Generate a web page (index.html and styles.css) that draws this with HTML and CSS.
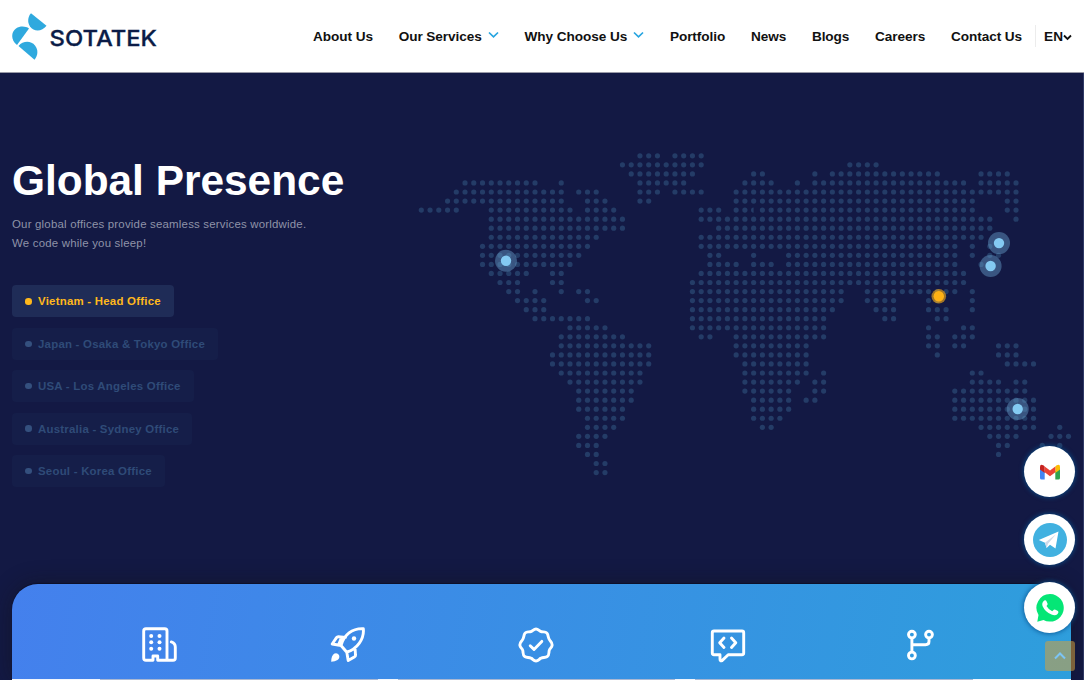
FILE: index.html
```html
<!DOCTYPE html>
<html lang="en">
<head>
<meta charset="utf-8">
<title>SotaTek - Global Presence</title>
<link rel="stylesheet" href="styles.css">
</head>
<body>
<header class="header">
  <a class="logo">
    <svg class="logo-svg" width="146" height="48" viewBox="0 0 146 48">
      <g fill="#2fa9de">
        <path d="M19 1.300L34.500 13.700C30 19.700 22 20 18 14.500C15 10 16 4.500 19 1.300Z"/>
        <path d="M17 16.500L5 33C-1.500 28 -1 20 4 16.500C8 13.800 13.500 14 17 16.500Z"/>
        <path d="M6.500 34C11 28.500 19 28.500 23 33.500C26.500 38 26 43.500 22.500 47.700Z"/>
      </g>
      <text class="logo-text" x="37.500" y="34.300" textLength="107.500" lengthAdjust="spacingAndGlyphs">SOTATEK</text>
    </svg>
  </a>
  <nav class="nav">
    <a>About Us</a>
    <a>Our Services<svg class="caret" width="11" height="8" viewBox="0 0 11 8"><path d="M1 1.500 L5.500 5.800 L10 1.500"/></svg></a>
    <a>Why Choose Us<svg class="caret" width="11" height="8" viewBox="0 0 11 8"><path d="M1 1.500 L5.500 5.800 L10 1.500"/></svg></a>
    <a>Portfolio</a>
    <a>News</a>
    <a>Blogs</a>
    <a>Careers</a>
    <a>Contact Us</a>
  </nav>
  <div class="lang">EN<svg width="9" height="7" viewBox="0 0 9 7"><path d="M1 1.500 L4.500 5 L8 1.500"/></svg></div>
</header>

<main class="hero">
  <section class="presence">
    <div class="intro">
      <h1>Global Presence</h1>
      <p>Our global offices provide seamless services worldwide.<br>We code while you sleep!</p>
      <ul class="offices">
        <li class="active">Vietnam - Head Office</li>
        <li>Japan - Osaka &amp; Tokyo Office</li>
        <li>USA - Los Angeles Office</li>
        <li>Australia - Sydney Office</li>
        <li>Seoul - Korea Office</li>
      </ul>
    </div>
    <svg class="map" width="664" height="340" viewBox="410 145 664 340">
      <g id="dots"><path d="M753.600 207.500a2.600 2.600 0 0 0 0 5.200z"/></g>
      <g class="pin">
        <circle class="halo" cx="506" cy="260.800" r="11"/><circle cx="506" cy="260.800" r="5.200"/>
        <circle class="halo" cx="999" cy="243.100" r="11"/><circle cx="999" cy="243.100" r="5.200"/>
        <circle class="halo" cx="990.600" cy="266" r="11"/><circle cx="990.600" cy="266" r="5.200"/>
        <circle class="halo" cx="1017.700" cy="409" r="11"/><circle cx="1017.700" cy="409" r="5.200"/>
      </g>
      <g class="pin hq"><circle class="halo" cx="938.800" cy="296.300" r="7.300"/><circle cx="938.800" cy="296.300" r="5.200"/></g>
    </svg>
  </section>

  <section class="stats">
    <svg class="icon" width="36" height="36" viewBox="0 0 36 36">
      <path d="M4 1.700H22.700Q25 1.700 25 4V33.300H15.700V29H11V33.300H4Q1.700 33.300 1.700 31V4Q1.700 1.700 4 1.700Z M25 33.300H31Q33.300 33.300 33.300 31V20Q33.300 16.200 29.300 14.900"/>
      <g class="solid"><circle cx="9.200" cy="9" r="2"/><circle cx="17.500" cy="9" r="2"/><circle cx="9.200" cy="15.300" r="2"/><circle cx="17.500" cy="15.300" r="2"/><circle cx="9.200" cy="21.700" r="2"/><circle cx="17.500" cy="21.700" r="2"/></g>
    </svg>
    <svg class="icon" width="36" height="36" viewBox="0 0 36 36">
      <path d="M11 18.500C14 8 22 1.200 33.300 1.700C34.500 12 27 22 16.800 25.200Z M11 18.500L2.200 17L6.500 10.600Q7.200 9.600 8.500 9.700L15.500 10.400 M16.800 25.200L18.200 33.600L24.700 29.700Q25.600 29 25.500 28L25 20.500 M11.500 10.500L8.700 17.500"/>
      <g class="solid"><circle cx="24" cy="11.500" r="2.200"/><path d="M1.200 34.800Q1.200 28.500 4.500 26.600Q7.300 25.500 9 28Q10.200 31 7.500 33Q5 34.700 1.200 34.800Z"/></g>
    </svg>
    <svg class="icon" width="36" height="36" viewBox="0 0 36 36">
      <path d="M18 2C20.500 2 21.400 4.500 23.700 4.800C26 5.100 28 4.200 29.300 6.700C30.400 8.800 30.100 11 31.600 13C32.700 14.700 34.700 15.600 34 18.700C33.600 20.600 31.700 21.500 31.200 23.500C30.700 25.700 31.400 28.200 29.300 29.500C27.300 30.800 25.200 30.200 23 31.200C21 32 20.400 34 18 34C15.600 34 15 32 13 31.200C10.800 30.200 8.700 30.800 6.700 29.500C4.600 28.200 5.300 25.700 4.800 23.500C4.300 21.500 2.400 20.600 2 18.700C1.300 15.600 3.300 14.700 4.400 13C5.900 11 5.600 8.800 6.700 6.700C8 4.200 10 5.100 12.300 4.800C14.600 4.500 15.500 2 18 2Z"/>
      <path d="M12.200 18.700L16 22.400L23.800 14.400"/>
    </svg>
    <svg class="icon" width="36" height="36" viewBox="0 0 36 36">
      <path d="M4 4H32Q33.700 4 33.700 5.700V26Q33.700 27.700 32 27.700H18.200L12 33.600Q10 34.400 10 32V27.700H4Q2.300 27.700 2.300 26V5.700Q2.300 4 4 4Z M14 11L9.700 15.700L14 20.500 M21.500 11L25.800 15.700L21.500 20.500"/>
    </svg>
    <svg class="icon" width="36" height="36" viewBox="0 0 36 36">
      <circle cx="8.900" cy="7.600" r="3.400"/><circle cx="26" cy="7.600" r="3.400"/><circle cx="8.900" cy="28.500" r="3.400"/>
      <path d="M8.900 11.300V24.800 M8.900 17.700H22.500Q26 17.700 26 14.500V11.300"/>
    </svg>
    <div class="stats-foot"><i></i><i></i><i></i></div>
  </section>
</main>

<aside class="contacts">
  <a class="round">
    <svg width="20" height="16" viewBox="0 0 20 16"><path fill="#4285f4" d="M0 4.500L4.700 7V15.500H1.500Q0 15.500 0 14Z"/><path fill="#2fa350" d="M20 4.500L15.300 7V15.500H18.500Q20 15.500 20 14Z"/><path fill="#fbbc04" d="M15.300 2.400L16.700 1.300Q20-.5 20 3V5.600L15.300 9Z"/><path fill="#c5221f" d="M4.700 2.400L3.300 1.300Q0-.5 0 3V5.600L4.700 9Z"/><path fill="#ea4335" d="M4.700 2.400L10 6.500L15.300 2.400V8.300L10 12.200L4.700 8.300Z"/></svg>
  </a>
  <a class="round">
    <svg width="34" height="34" viewBox="0 0 34 34"><circle cx="17" cy="17" r="17" fill="#41b1e0"/><path fill="#fff" d="M25.500 8.500L5.800 17L12 19.800L13.600 25L17 21.800L22.500 25.500Z"/><path fill="#cfd9e8" d="M12 19.800L23 11.300L15 20.800L13.600 25Z"/></svg>
  </a>
  <a class="round">
    <svg width="28" height="28" viewBox="0 0 28 28"><path fill="#05e676" d="M14 0A13.800 13.800 0 1 1 7.500 26L1.300 27.700L2.500 21A13.800 13.800 0 0 1 14 0Z"/><path fill="#fff" d="M8.200 6.600Q9.800 5.700 10.500 7.200L11.600 9.800Q11.900 10.700 10.500 12.100Q12.400 15.600 16.200 17.300L17.800 15.800Q18.600 15.200 19.500 15.700L22 17Q23.100 17.900 21.600 19.900Q19.500 22 15.500 20.600Q9 17.900 6.500 12Q5.500 8.700 8.200 6.600Z"/></svg>
  </a>
  <a class="to-top"><svg width="12" height="8" viewBox="0 0 12 8"><path d="M1 6.500L6 1.500L11 6.500"/></svg></a>
</aside>
<script src="map.js"></script>
</body>
</html>
```

FILE: styles.css
```css
* { box-sizing: border-box; }
body {
  margin: 0;
  width: 1084px;
  height: 680px;
  overflow: hidden;
  position: relative;
  font-family: "Liberation Sans", Arial, sans-serif;
  background: #131944;
}
.header {
  height: 73px;
  padding: 0 12px;
  display: flex;
  align-items: center;
  background: #fff;
  border-bottom: 1px solid #9a9ba8;
}
.logo { display: block; height: 48px; }
.logo-svg { display: block; }
.logo-text { font: 500 22px Inter, sans-serif; fill: #0b1c47; stroke: #0b1c47; stroke-width: .3; }
.nav {
  margin-left: auto;
  display: flex;
  gap: 25.700px;
  font-size: 13.600px;
  letter-spacing: -.06px;
  font-weight: 700;
  color: #111;
  white-space: nowrap;
  padding-top: 1px;
}
.caret { margin-left: 6px; vertical-align: 2px; }
.caret path { fill: none; stroke: #27a5e0; stroke-width: 1.700; }
.lang {
  margin-left: 13px;
  padding: 1px 0 0 8px;
  height: 22px;
  line-height: 21px;
  border-left: 1px solid #ececec;
  font-size: 13.600px;
  font-weight: 700;
  color: #111;
  white-space: nowrap;
}
.lang svg path { fill: none; stroke: #111; stroke-width: 1.800; }
.hero {
  height: 607px;
  display: flex;
  flex-direction: column;
  border-right: 1px solid #303a66;
}
.presence {
  height: 511px;
  flex: none;
  padding: 72px 9px 0 12px;
  display: flex;
  justify-content: space-between;
}
.intro { padding-top: 11px; white-space: nowrap; }
h1 { margin: 0; font-size: 42.400px; line-height: 50px; color: #fff; }
p { margin: 9px 0 0; font-size: 11.450px; letter-spacing: .2px; line-height: 18.700px; color: #8f93a8; }
.offices {
  list-style: none;
  margin: 33px 0 0;
  padding: 0;
  display: flex;
  flex-direction: column;
  align-items: flex-start;
  gap: 10.400px;
}
.offices li {
  height: 32px;
  padding: 0 13.300px;
  display: flex;
  align-items: center;
  gap: 6.300px;
  border-radius: 4px;
  background: #151e49;
  color: #2f4b78;
  font-size: 11.450px;
  letter-spacing: .23px;
  font-weight: 700;
}
.offices li::before {
  content: "";
  width: 6.400px;
  height: 6.400px;
  border-radius: 50%;
  background: #34507e;
}
.offices .active { background: #1f2c57; color: #ffb81c; }
.offices .active::before { background: #ffb81c; }
.map { display: block; flex: none; }
#dots { fill: #243c67; }
.pin { fill: #84caf2; }
.pin .halo { fill: rgba(105, 160, 205, .45); }
.hq { fill: #ffb114; }
.hq .halo { fill: rgba(255, 177, 20, .6); }
.stats {
  height: 96px;
  flex: none;
  margin: 0 12px;
  padding: 43px 0 0 130px;
  display: grid;
  grid-template-columns: 188px 188px 192px 193px 36px;
  grid-template-rows: 36px 17px;
  border-radius: 26px 26px 0 0;
  background: linear-gradient(100deg, #4480ed, #2e9edc);
  box-shadow: 0 0 22px rgba(20, 20, 20, .45), 0 -1px 1px #0c1030;
}
.icon { fill: none; stroke: #fff; stroke-width: 2.900; stroke-linecap: round; stroke-linejoin: round; }
.icon .solid { fill: #fff; stroke: none; }
.stats-foot {
  grid-column: 1 / 6;
  align-self: end;
  width: 1059px;
  height: 1px;
  margin-left: -130px;
  padding: 0 98px 0 88px;
  display: flex;
  gap: 20px;
  background: #f2f6fd;
}
.stats-foot i { flex: 1; background: #a9b8d4; }
.contacts {
  position: absolute;
  top: 446px;
  right: 9px;
  display: flex;
  flex-direction: column;
  align-items: flex-end;
}
.round {
  width: 51px;
  height: 51px;
  margin-bottom: 17px;
  border-radius: 50%;
  background: #fff;
  box-shadow: 0 0 4px 1px rgba(8, 80, 140, .75);
  display: flex;
  align-items: center;
  justify-content: center;
}
.to-top {
  width: 30px;
  height: 30px;
  margin-top: -9px;
  border-radius: 3px;
  background: rgba(212, 160, 60, .55);
  display: flex;
  align-items: center;
  justify-content: center;
}
.to-top path { fill: none; stroke: #7cc4f4; stroke-width: 2; }
```

FILE: map.js
```js
// Each entry is one latitude row; each pair is a first-last column span of land dots.
const rows = [
  "25-27 29-32", "23-32 49-52", "24-31 38-39 45-45 47-59 64-67",
  "5-13 16-16 25-30 37-40 43-43 45-62 64-68", "4-16 18-20 25-27 29-32 36-68",
  "3-16 19-21 25-26 36-63 67-68", "0-4 8-17 19-22 32-34 36-37 39-63 67-68",
  "8-23 32-65 68-68", "8-23 34-65", "8-20 32-64", "7-19 32-61 63-63 65-65",
  "7-18 33-34 38-38 42-61 63-63 65-66", "7-17 33-36 38-40 42-61 64-64",
  "8-12 15-16 32-62", "9-11 15-16 31-62", "10-11 13-13 16-16 18-19 31-48 51-61 63-63",
  "11-14 19-20 31-48 51-54 58-59 63-63", "12-14 31-47 52-54 58-60 63-63",
  "13-19 31-46 53-54 59-60", "17-21 31-46 58-58 62-63", "16-23 32-33 36-46 58-59 61-63",
  "16-26 36-44 58-59 61-62 66-68", "15-26 36-44 59-59 66-68", "15-26 37-44 67-70",
  "16-25 37-44 46-46 63-64", "17-25 37-43 45-46 63-66 68-69", "18-24 37-42 45-46 61-69",
  "18-24 38-42 44-45 61-70", "18-23 38-42 61-70", "19-23 38-41 61-70",
  "19-22 39-40 64-70 73-73", "18-21 65-68 72-74", "18-20 66-67 71-71 73-73",
  "19-20 66-66", "20-21", "20-21"
];
const layer = document.getElementById("dots");
const NS = "http://www.w3.org/2000/svg";
rows.forEach((row, r) => row.split(" ").forEach(span => {
  const [first, last] = span.split("-").map(Number);
  for (let c = first; c <= last; c++) {
    const dot = document.createElementNS(NS, "circle");
    dot.setAttribute("cx", 421.3 + c * 8.746);
    dot.setAttribute("cy", 155.8 + r * 9.05);
    dot.setAttribute("r", 2.6);
    layer.appendChild(dot);
  }
}));
```
